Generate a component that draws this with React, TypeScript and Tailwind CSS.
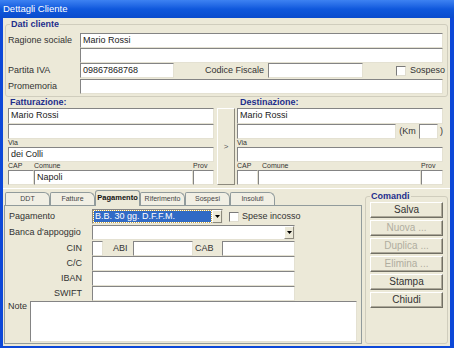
import React from 'react'

const boxCls =
  'bg-white border border-t-[#848484] border-l-[#848484] border-r-[#e4e1d2] border-b-[#e4e1d2] text-[9px] leading-[13px] pl-[2px] text-[#222] whitespace-nowrap overflow-hidden'

const raisedCls =
  'bg-[#ece9d8] border border-t-white border-l-white border-r-[#8d8a7d] border-b-[#8d8a7d]'

const Box = ({ className = '', children }: { className?: string; children?: React.ReactNode }) => (
  <div className={`${boxCls} ${className}`}>{children}</div>
)

const Check = () => (
  <span className="w-[10px] h-[10px] bg-white border border-t-[#7b7b7b] border-l-[#7b7b7b] border-r-[#e0ddd0] border-b-[#e0ddd0]" />
)

const Arrow = () => (
  <svg width="5" height="3" viewBox="0 0 5 3">
    <polygon points="0,0 5,0 2.5,3" fill="#000" />
  </svg>
)

const Combo = ({ className = '', text, selected }: { className?: string; text?: string; selected?: boolean }) => (
  <div className={`flex h-[15px] bg-white border border-t-[#848484] border-l-[#848484] border-r-[#e4e1d2] border-b-[#e4e1d2] ${className}`}>
    <div className="flex-1 p-[1px] overflow-hidden">
      {text && (
        <div
          className={`h-full text-[9px] leading-[11px] pl-[1px] whitespace-nowrap ${
            selected ? 'bg-[#316ac5] text-white outline-dotted outline-1 outline-[#c9a53a]' : 'text-[#222]'
          }`}
        >
          {text}
        </div>
      )}
    </div>
    <div className={`w-[10px] flex items-center justify-center ${raisedCls}`}>
      <Arrow />
    </div>
  </div>
)

const Tiny = ({ className = '', children }: { className?: string; children?: React.ReactNode }) => (
  <span className={`text-[7px] leading-[8px] text-[#333] ${className}`}>{children}</span>
)

const tabs = ['DDT', 'Fatture', 'Pagamento', 'Riferimento', 'Sospesi', 'Insoluti']

const commands = [
  { label: 'Salva', disabled: false },
  { label: 'Nuova ...', disabled: true },
  { label: 'Duplica ...', disabled: true },
  { label: 'Elimina ...', disabled: true },
  { label: 'Stampa', disabled: false },
  { label: 'Chiudi', disabled: false }
]

const App = () => {
  return (
    <div className="w-[454px] h-[348px] bg-[#0d48d8] flex flex-col overflow-hidden font-['Liberation_Sans',Arial,sans-serif]">
      {/* Title bar */}
      <div className="h-[18px] shrink-0 bg-linear-to-b from-[#3d82f2] via-[#0f58dc] to-[#0a4bcd] text-white text-[9.5px] leading-[17px] pl-[3px]">
        Dettagli Cliente
      </div>

      <div className="flex-1 ml-[3px] mr-[4px] mb-[2px] bg-[#ece9d8] flex flex-col text-[9px] text-[#333]">
        {/* Dati cliente */}
        <fieldset className="mx-[2px] mt-[1px] border border-[#d0cdbd] rounded-[3px] pb-[2px]">
          <legend className="ml-[4px] px-[1px] text-[9px] leading-[11px] font-bold text-[#1e2e8c]">Dati cliente</legend>
          <div className="flex items-center mt-[3px]">
            <span className="w-[74px] pl-[2px]">Ragione sociale</span>
            <Box className="w-[363px] h-[15px]">Mario Rossi</Box>
          </div>
          <div className="flex">
            <Box className="ml-[74px] w-[363px] h-[15px]" />
          </div>
          <div className="flex items-center">
            <span className="w-[74px] pl-[2px]">Partita IVA</span>
            <Box className="w-[94px] h-[15px]">09867868768</Box>
            <span className="w-[94px] text-right pr-[4px]">Codice Fiscale</span>
            <Box className="w-[95px] h-[15px]" />
            <div className="ml-[33px] flex items-center gap-[4px]">
              <Check />
              <span>Sospeso</span>
            </div>
          </div>
          <div className="flex items-center mt-[1px]">
            <span className="w-[74px] pl-[2px]">Promemoria</span>
            <Box className="w-[363px] h-[15px]" />
          </div>
        </fieldset>

        {/* Fatturazione / Destinazione */}
        <div className="flex pl-[5px] pb-[3px] border-b border-b-white">
          <div className="w-[206px] flex flex-col">
            <span className="h-[11px] leading-[11px] pl-[2px] font-bold text-[#1e2e8c]">Fatturazione:</span>
            <Box className="h-[16px]">Mario Rossi</Box>
            <Box className="h-[15px]" />
            <Tiny className="h-[8px]">Via</Tiny>
            <Box className="h-[15px]">dei Colli</Box>
            <div className="flex h-[8px]">
              <Tiny className="w-[26px]">CAP</Tiny>
              <Tiny className="w-[159px]">Comune</Tiny>
              <Tiny>Prov</Tiny>
            </div>
            <div className="flex">
              <Box className="w-[26px] h-[15px]" />
              <Box className="w-[159px] h-[15px]">Napoli</Box>
              <Box className="w-[21px] h-[15px]" />
            </div>
          </div>

          <div className={`mt-[11px] ml-[3px] w-[18px] h-[77px] flex items-center justify-center text-[8px] text-[#555] ${raisedCls}`}>
            &gt;
          </div>

          <div className="ml-[2px] w-[206px] flex flex-col">
            <span className="h-[11px] leading-[11px] pl-[3px] font-bold text-[#1e2e8c]">Destinazione:</span>
            <Box className="h-[16px]">Mario Rossi</Box>
            <div className="flex items-center h-[15px]">
              <Box className="w-[160px] h-[15px]" />
              <span className="w-[23px] pl-[3px]">(Km</span>
              <Box className="w-[19px] h-[15px]" />
              <span className="pl-[2px]">)</span>
            </div>
            <Tiny className="h-[8px]">Via</Tiny>
            <Box className="h-[15px]" />
            <div className="flex h-[8px]">
              <Tiny className="w-[21px]">CAP</Tiny>
              <Tiny className="w-[163px] pl-[4px]">Comune</Tiny>
              <Tiny>Prov</Tiny>
            </div>
            <div className="flex">
              <Box className="w-[21px] h-[15px]" />
              <Box className="w-[163px] h-[15px]" />
              <Box className="w-[22px] h-[15px]" />
            </div>
          </div>
        </div>

        {/* Tabs + Comandi */}
        <div className="flex flex-1 ml-[1px]">
          <div className="w-[358px] flex flex-col mb-[2px]">
            <div className="h-[16px] flex items-end pl-[1px]">
              {tabs.map(t =>
                t === 'Pagamento' ? (
                  <div
                    key={t}
                    className="relative z-10 w-[45px] h-[16px] -mb-[1px] bg-[#ece9d8] border border-b-0 border-[#919b9c] rounded-t-[3px] text-[7.5px] font-bold leading-[13px] text-center text-[#111]"
                  >
                    {t}
                  </div>
                ) : (
                  <div
                    key={t}
                    className="w-[45px] h-[13px] bg-[#f1efe4] border border-b-0 border-[#919b9c] rounded-tl-[2px] rounded-tr-[6px] text-[7px] leading-[12px] text-center text-[#444]"
                  >
                    {t}
                  </div>
                )
              )}
            </div>
            <div className="flex-1 border border-[#919b9c] flex flex-col pt-[3px]">
              <div className="flex items-center h-[15px]">
                <span className="w-[87px] pl-[4px]">Pagamento</span>
                <Combo className="w-[131px]" text="B.B. 30 gg. D.F.F.M." selected />
                <div className="ml-[6px] flex items-center gap-[3px]">
                  <Check />
                  <span>Spese incosso</span>
                </div>
              </div>
              <div className="flex items-center h-[15px] mt-[1px]">
                <span className="w-[87px] pl-[4px]">Banca d&apos;appoggio</span>
                <Combo className="w-[203px]" />
              </div>
              <div className="flex items-center h-[15px] mt-[1px]">
                <span className="w-[87px] text-right pr-[10px]">CIN</span>
                <Box className="w-[11px] h-[15px]" />
                <span className="w-[30px] pl-[10px]">ABI</span>
                <Box className="w-[60px] h-[15px]" />
                <span className="w-[29px] pl-[2px]">CAB</span>
                <Box className="w-[73px] h-[15px]" />
              </div>
              {['C/C', 'IBAN', 'SWIFT'].map(l => (
                <div key={l} className="flex items-center h-[15px]">
                  <span className="w-[87px] text-right pr-[10px]">{l}</span>
                  <Box className="w-[203px] h-[15px]" />
                </div>
              ))}
              <div className="flex">
                <span className="w-[25px] pl-[3px] leading-[10px]">Note</span>
                <Box className="w-[327px] h-[41px]" />
              </div>
            </div>
          </div>

          <fieldset className="ml-[3px] mt-[2px] mb-[2px] w-[83px] border border-[#d0cdbd] rounded-[3px]">
            <legend className="ml-[4px] px-[1px] text-[9px] leading-[11px] font-bold text-[#1e2e8c]">Comandi</legend>
            <div className="flex flex-col gap-[2px] ml-[4px]">
              {commands.map(c => (
                <div
                  key={c.label}
                  className={`w-[73px] h-[16px] text-[10px] leading-[14px] text-center bg-[#ece9d8] border border-t-white border-l-white border-r-[#716f64] border-b-[#716f64] shadow-[inset_-1px_-1px_0_#aca899] ${
                    c.disabled ? 'text-[#b0ad9f]' : 'text-[#333]'
                  }`}
                >
                  {c.label}
                </div>
              ))}
            </div>
          </fieldset>
        </div>
      </div>
    </div>
  )
}

export default App
